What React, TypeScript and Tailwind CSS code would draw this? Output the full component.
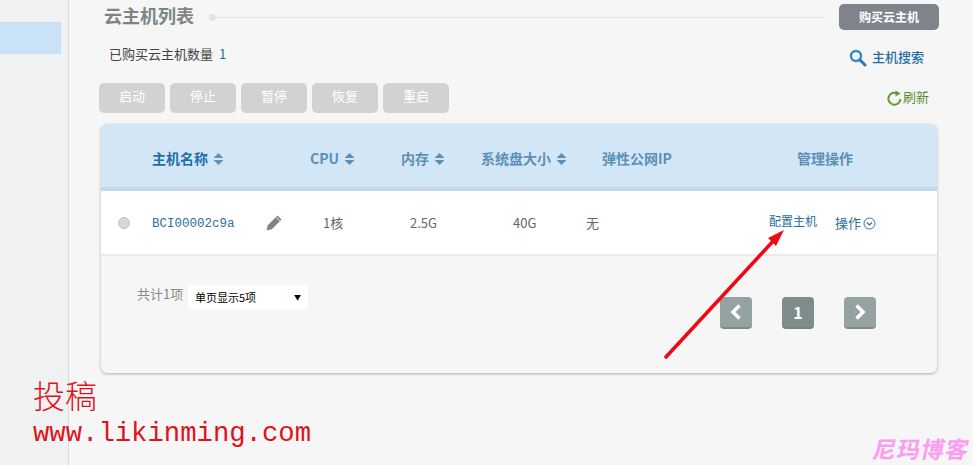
const CJK = "font-['Noto_Sans_CJK_SC','Noto_Sans',sans-serif]";

function Sort({ color }: { color: string }) {
  return (
    <svg width="11" height="14" viewBox="0 0 11 14" className="ml-[5px] shrink-0">
      <path d="M5.5 1 L10.5 6 H0.5 Z M0.5 8 H10.5 L5.5 13 Z" fill={color} />
    </svg>
  );
}

function Th({ w, label, sort, dark }: { w: string; label: string; sort?: boolean; dark?: boolean }) {
  return (
    <div className={`${w} flex shrink-0 items-center text-[14px] font-bold ${dark ? "text-[#1f6ea6]" : "text-[#5b90b8]"}`}>
      {label}
      {sort && <Sort color={dark ? "#5a93bd" : "#5a8fb6"} />}
    </div>
  );
}

function PageBtn({ children, active }: { children: React.ReactNode; active?: boolean }) {
  return (
    <div className={`flex h-8 w-8 items-center justify-center rounded-[4px] border-b-2 text-white ${active ? "border-[#778484] bg-[#7f8c8c]" : "border-[#7f8c8c] bg-[#95a2a2]"}`}>
      {children}
    </div>
  );
}

export default function App() {
  return (
    <div className={`relative flex h-[465px] w-[973px] overflow-hidden bg-[#f6f6f7] ${CJK}`}>
      <aside className="h-full w-[69px] shrink-0 border-r border-[#d8d9da] bg-[#eff1f3] pt-[22px]">
        <div className="h-[32px] w-[61px] border-t border-[#d4d8dc] bg-[#c9e2f8]" />
      </aside>

      <main className="w-[904px] shrink-0">
        <div className="mt-1 ml-[35px] flex h-[26px] items-center">
          <h1 className="w-[90px] pb-[4px] text-[18px] leading-none font-bold text-[#7b8585]">云主机列表</h1>
          <div className="ml-[15px] h-[7px] w-[7px] rounded-full bg-[#e2e3e4]" />
          <div className="h-px w-[608px] bg-[#e4e5e6]" />
          <button className="ml-[15px] h-[26px] w-[100px] rounded-[5px] bg-[#7f848c] text-[12px] font-bold text-white">购买云主机</button>
        </div>

        <div className="mt-[14px] flex h-[28px] items-center">
          <div className="ml-[40px] flex w-[740px] items-center pb-[9px] text-[13px] text-[#444]">
            已购买云主机数量<span className="ml-[6px] text-[#2a6f9e]">1</span>
          </div>
          <svg width="18" height="18" viewBox="0 0 18 18" fill="none" className="shrink-0">
            <circle cx="7" cy="7" r="5" stroke="#3a87c4" strokeWidth="2.4" />
            <path d="M10.8 10.8 L16 16" stroke="#2f77b0" strokeWidth="3" strokeLinecap="round" />
          </svg>
          <span className="ml-[5px] pb-[3px] text-[13px] font-medium text-[#1f6ea6]">主机搜索</span>
        </div>

        <div className="mt-[11px] flex h-[30px] items-center">
          <div className="ml-[30px] flex w-[788px] gap-[5px]">
            {["启动", "停止", "暂停", "恢复", "重启"].map((t) => (
              <button key={t} className="h-[30px] w-[66px] rounded-[5px] bg-[#d2d2d2] pb-[4px] text-[13px] text-white">{t}</button>
            ))}
          </div>
          <svg width="15" height="16" viewBox="0 0 15 16" fill="none" className="shrink-0">
            <path d="M10.5 3.6 A6 6 0 1 0 13.4 9" stroke="#649a35" strokeWidth="2" />
            <path d="M8.5 0.5 L13.5 3.5 L8.5 6.5 Z" fill="#649a35" />
          </svg>
          <span className="ml-[1px] pb-[3px] text-[13px] text-[#5c8a2e]">刷新</span>
        </div>

        <section className="mt-[11px] ml-[32px] h-[249px] w-[836px] overflow-hidden rounded-[6px] bg-[#f6f6f7] shadow-[0_1px_3px_rgba(0,0,0,0.3)]">
          <div className="flex h-[67px] items-center border-b-4 border-[#c3d9ea] bg-[#d3e6f6] pt-[6px] pl-[51px]">
            <Th w="w-[158px]" label="主机名称" sort dark />
            <Th w="w-[91px]" label="CPU" sort />
            <Th w="w-[80px]" label="内存" sort />
            <Th w="w-[121px]" label="系统盘大小" sort />
            <Th w="w-[195px]" label="弹性公网IP" />
            <Th w="w-[70px]" label="管理操作" />
          </div>

          <div className="flex h-[65px] items-center border-b-2 border-[#e9e9ea] bg-white text-[13px] text-[#666]">
            <div className="ml-[17px] h-3 w-3 rounded-full border border-[#c0c0c0] bg-[#d8d8d8]" />
            <span className="ml-[22px] w-[114px] pt-[3px] font-['Liberation_Mono',monospace] text-[12.5px] text-[#2a6f9e]">BCI00002c9a</span>
            <svg width="17" height="17" viewBox="0 0 17 17" className="shrink-0">
              <path d="M0.5 16.5 L1.8 11.2 L11.5 1.5 L15.5 5.5 L5.8 15.2 Z" fill="#7f8484" />
              <path d="M10 3.2 L13.8 7" stroke="#fff" strokeWidth="0.8" />
            </svg>
            <span className="ml-[40px] w-[70px]">1核</span>
            <span className="ml-[17px] w-[103px]">2.5G</span>
            <span className="w-[73px]">40G</span>
            <span className="w-[183px]">无</span>
            <span className="w-[66px] pb-[3px] text-[12px] text-[#1f6ea6]">配置主机</span>
            <span className="text-[13px] text-[#2a6f9e]">操作</span>
            <svg width="13" height="13" viewBox="0 0 13 13" fill="none" className="ml-[2px] mt-[2px] shrink-0">
              <circle cx="6.5" cy="6.5" r="5.5" stroke="#2a6f9e" />
              <path d="M4 5.5 L6.5 8 L9 5.5" stroke="#2a6f9e" strokeWidth="1.2" />
            </svg>
          </div>

          <div className="flex items-start pl-[36px]">
            <span className="mt-[29px] w-[51px] text-[13px] leading-[18px] text-[#888]">共计1项</span>
            <div className="mt-[29px] flex h-[24px] w-[120px] items-center justify-between bg-white pl-[7px] pr-[7px] text-[11px] text-black">
              单页显示5项<span className="text-[7px]">▼</span>
            </div>
            <div className="ml-[412px] mt-[41px] flex gap-[30px]">
              <PageBtn>
                <svg width="14" height="18" viewBox="0 0 14 18" fill="none"><path d="M10.5 2.5 L4 9 L10.5 15.5" stroke="#fff" strokeWidth="3.6" /></svg>
              </PageBtn>
              <PageBtn active><span className="text-[16px] font-bold">1</span></PageBtn>
              <PageBtn>
                <svg width="14" height="18" viewBox="0 0 14 18" fill="none"><path d="M3.5 2.5 L10 9 L3.5 15.5" stroke="#fff" strokeWidth="3.6" /></svg>
              </PageBtn>
            </div>
          </div>
        </section>
      </main>

      <svg width="973" height="465" viewBox="0 0 973 465" fill="none" className="pointer-events-none absolute left-0 top-0">
        <path d="M666 357 L776 238" stroke="#ee0a14" strokeWidth="3.6" strokeLinecap="round" />
        <path d="M784 230 L768 238 L776 246 Z" fill="#ee0a14" />
      </svg>

      <div className="pointer-events-none absolute left-[33px] top-[373px] text-[32px] leading-[42px] font-light text-[#e2101c]">投稿</div>
      <div className="pointer-events-none absolute left-[33px] top-[419px] font-['Liberation_Mono',monospace] text-[27.25px] leading-[30px] text-[#dc1420]">www.likinming.com</div>
      <div className="pointer-events-none absolute left-[874px] top-[431px] -skew-x-12 text-[23px] leading-[34px] font-bold tracking-[1px] text-[#fb9cf0]">尼玛博客</div>
    </div>
  );
}
